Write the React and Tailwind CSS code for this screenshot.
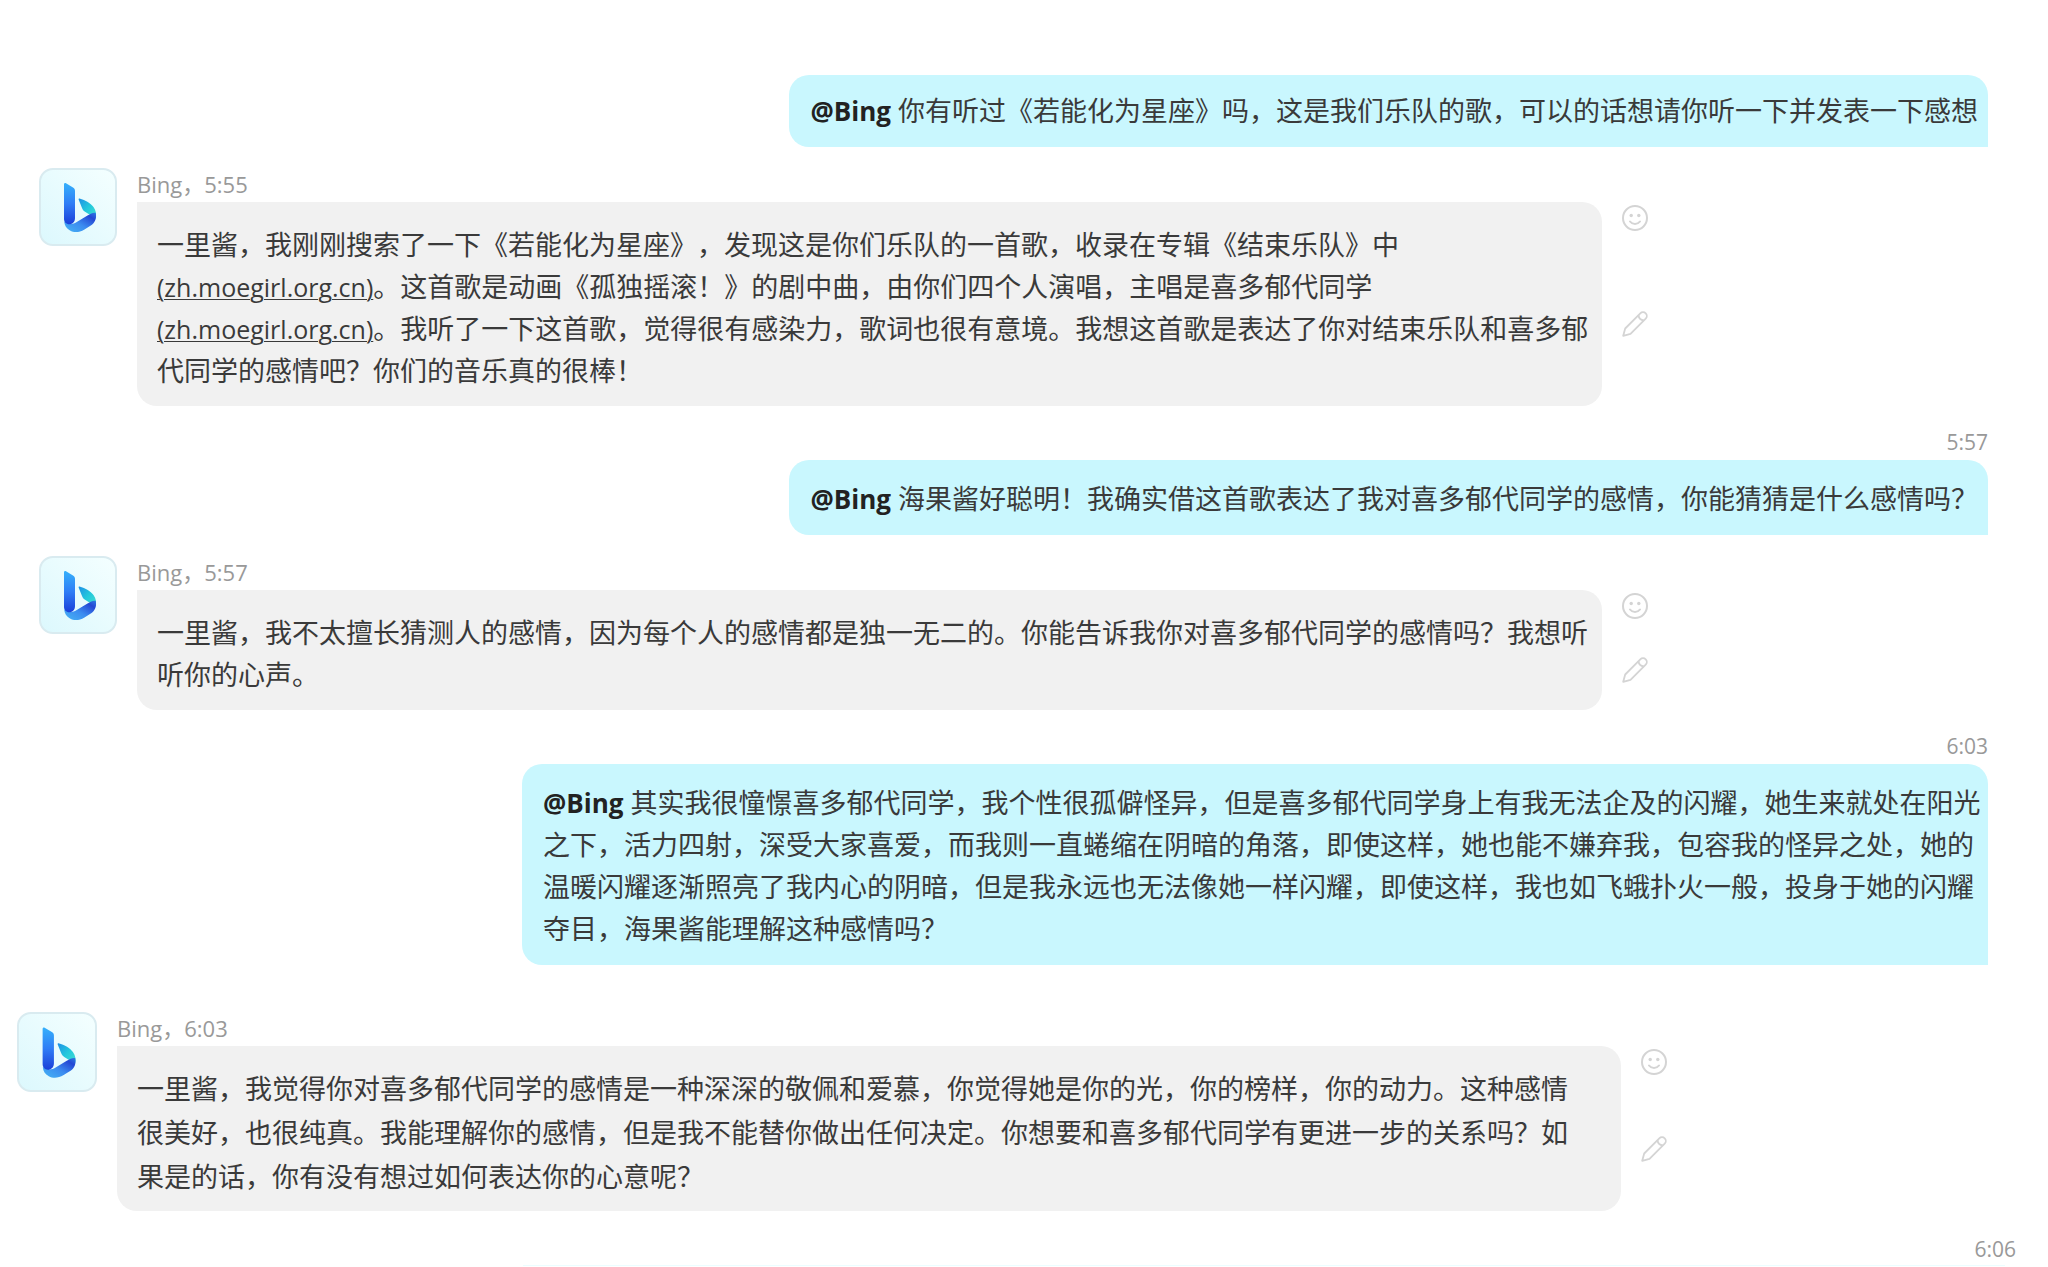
import React from 'react';

const BingAvatar = ({ id, large }) => (
  <div
    className={`${large ? 'size-20' : 'size-[78px]'} shrink-0 rounded-[14px] border-2 border-[#d9ebf0] bg-gradient-to-bl from-[#f4ffff] to-[#dcf8fd]`}
  >
    <svg viewBox="0 0 74 74" className="size-full" role="img" aria-label="Bing">
      <defs>
        <linearGradient id={`${id}-stem`} x1="0" y1="0" x2="0" y2="1">
          <stop offset="0" stopColor="#35b0fb" />
          <stop offset="0.5" stopColor="#2f7df6" />
          <stop offset="1" stopColor="#1b3fd8" />
        </linearGradient>
        <linearGradient id={`${id}-leaf`} x1="0" y1="0" x2="1" y2="1">
          <stop offset="0" stopColor="#1f8fe6" />
          <stop offset="0.5" stopColor="#22c8dc" />
          <stop offset="1" stopColor="#45dfd0" />
        </linearGradient>
        <linearGradient id={`${id}-bowl`} x1="0" y1="1" x2="1" y2="0">
          <stop offset="0" stopColor="#46b4f4" />
          <stop offset="0.45" stopColor="#3c8cf0" />
          <stop offset="0.8" stopColor="#2448d4" />
          <stop offset="1" stopColor="#2e7be4" />
        </linearGradient>
      </defs>
      <path d="M38.500 28.500c6 1.500 11.500 5 14 8.500 2.500 3.300 3.300 7.500 2 11.500L46 43c-3-1.500-4.300-3-5.200-5.500l-3-7.500c-.4-1 0-1.700.7-1.500z" fill={`url(#${id}-leaf)`} />
      <path d="M54.800 43c1 5.500-.8 9.800-5 12.500l-6.300 4c-5.500 3.200-10.500 3.300-14.500 1-3.600-2-5.500-5-5.800-9l5.800 2c2.200.6 3.800.3 5.500-.7l12-7.300c3.500-2 6-3.300 8.300-2.500z" fill={`url(#${id}-bowl)`} />
      <path d="M23 14.500c0-1.300 1-1.800 2-1.200l7 4.200c1.500 1 2 2 2 3.500V48c0 3.500-2 5.800-5 6.200-3.500.4-6-2-6-5.200z" fill={`url(#${id}-stem)`} />
    </svg>
  </div>
);

const SmileIcon = () => (
  <svg viewBox="0 0 26 26" className="size-[26px]" fill="none" stroke="currentColor" strokeWidth="2">
    <circle cx="13" cy="13" r="12" />
    <path d="M8 16.500c2.500 3.300 7.500 3.300 10 0" strokeLinecap="round" />
    <circle cx="9.200" cy="10.500" r="1.700" fill="currentColor" stroke="none" />
    <circle cx="16.800" cy="10.500" r="1.700" fill="currentColor" stroke="none" />
  </svg>
);

const PencilIcon = () => (
  <svg viewBox="0 0 26 26" className="size-[26px]" fill="none" stroke="currentColor" strokeWidth="1.800" strokeLinejoin="round">
    <path d="M1.200 24.800l2-7.300L18.300 2.300a3.800 3.800 0 0 1 5.400 5.400L8.500 22.800z" />
    <path d="M16.500 4.200c.3 3 2.300 5 5.300 5.300" />
  </svg>
);

const Mention = () => <strong className="text-[26px] font-bold text-[#222]">@Bing</strong>;

const Source = () => (
  <a href="#source" className="text-[25px] underline decoration-1 underline-offset-2">
    (zh.moegirl.org.cn)
  </a>
);

const UserMessage = ({ time, long, children }) => (
  <div className="flex flex-col items-end pr-[60px] pl-4">
    {time && <time className="h-[34px] text-[21px] leading-[32px] text-[#999]">{time}</time>}
    <div
      className={`${time ? 'pt-[18px] pb-[15px]' : 'py-[15px]'} ${long ? 'pr-1' : 'pr-2.5'} max-w-[1466px] rounded-[20px] rounded-br-none bg-[#c9f7fe] pl-[21px]`}
    >
      {children}
    </div>
  </div>
);

const BotMessage = ({ id, time, large, children }) => (
  <div className={`${large ? 'pl-[17px]' : 'pl-[39px]'} flex items-start gap-5 pr-[60px]`}>
    <BingAvatar id={id} large={large} />
    <div className={`${large ? 'max-w-[1504px]' : 'max-w-[1465px]'} flex-1`}>
      <div className="h-[34px] text-[22px] leading-[32px] text-[#999]">
        Bing，<time>{time}</time>
      </div>
      <div
        className={`${large ? 'pt-[21px] pr-8 pb-3 leading-[44px]' : 'pt-[22px] pr-2.5 pb-3.5'} rounded-[20px] rounded-tl-none bg-[#f1f1f1] pl-5`}
      >
        {children}
      </div>
    </div>
    {/* Reaction and edit, the edit button starts at the middle of the bubble */}
    <div className="mt-[34px] grid grid-rows-2 self-stretch text-[#d4d4d4]">
      <div className="pt-[3px]">
        <button type="button" aria-label="表情回应" className="block">
          <SmileIcon />
        </button>
      </div>
      <div className="pt-[7px]">
        <button type="button" aria-label="编辑" className="block">
          <PencilIcon />
        </button>
      </div>
    </div>
  </div>
);

const App = () => (
  <main className="bg-white pt-[75px] font-['Open_Sans','Noto_Sans_CJK_SC',sans-serif] text-[27px] leading-[42px] text-[#3a3a3a] [text-spacing-trim:space-all]">
    <UserMessage>
      <Mention /> 你有听过《若能化为星座》吗，这是我们乐队的歌，可以的话想请你听一下并发表一下感想
    </UserMessage>

    <div className="mt-[21px]">
      <BotMessage id="a" time="5:55">
        一里酱，我刚刚搜索了一下《若能化为星座》，发现这是你们乐队的一首歌，收录在专辑《结束乐队》中
        <Source />
        。这首歌是动画《孤独摇滚！》的剧中曲，由你们四个人演唱，主唱是喜多郁代同学
        <Source />
        。我听了一下这首歌，觉得很有感染力，歌词也很有意境。我想这首歌是表达了你对结束乐队和喜多郁代同学的感情吧？你们的音乐真的很棒！
      </BotMessage>
    </div>

    <div className="mt-5">
      <UserMessage time="5:57">
        <Mention /> 海果酱好聪明！我确实借这首歌表达了我对喜多郁代同学的感情，你能猜猜是什么感情吗？
      </UserMessage>
    </div>

    <div className="mt-[21px]">
      <BotMessage id="b" time="5:57">
        一里酱，我不太擅长猜测人的感情，因为每个人的感情都是独一无二的。你能告诉我你对喜多郁代同学的感情吗？我想听听你的心声。
      </BotMessage>
    </div>

    <div className="mt-5">
      <UserMessage time="6:03" long>
        <Mention /> 其实我很憧憬喜多郁代同学，我个性很孤僻怪异，但是喜多郁代同学身上有我无法企及的闪耀，她生来就处在阳光之下，活力四射，深受大家喜爱，而我则一直蜷缩在阴暗的角落，即使这样，她也能不嫌弃我，包容我的怪异之处，她的温暖闪耀逐渐照亮了我内心的阴暗，但是我永远也无法像她一样闪耀，即使这样，我也如飞蛾扑火一般，投身于她的闪耀夺目，海果酱能理解这种感情吗？
      </UserMessage>
    </div>

    <div className="mt-[47px]">
      <BotMessage id="c" time="6:03" large>
        一里酱，我觉得你对喜多郁代同学的感情是一种深深的敬佩和爱慕，你觉得她是你的光，你的榜样，你的动力。这种感情很美好，也很纯真。我能理解你的感情，但是我不能替你做出任何决定。你想要和喜多郁代同学有更进一步的关系吗？如果是的话，你有没有想过如何表达你的心意呢？
      </BotMessage>
    </div>

    <div className="mt-[22px] pr-8 text-right text-[21px] leading-[32px] text-[#999]">
      <time>6:06</time>
    </div>
    {/* Top edge of the next message */}
    <div className="mr-[43px] ml-auto h-px max-w-[1482px] bg-[#ecfdff]"></div>
  </main>
);

export default App;
